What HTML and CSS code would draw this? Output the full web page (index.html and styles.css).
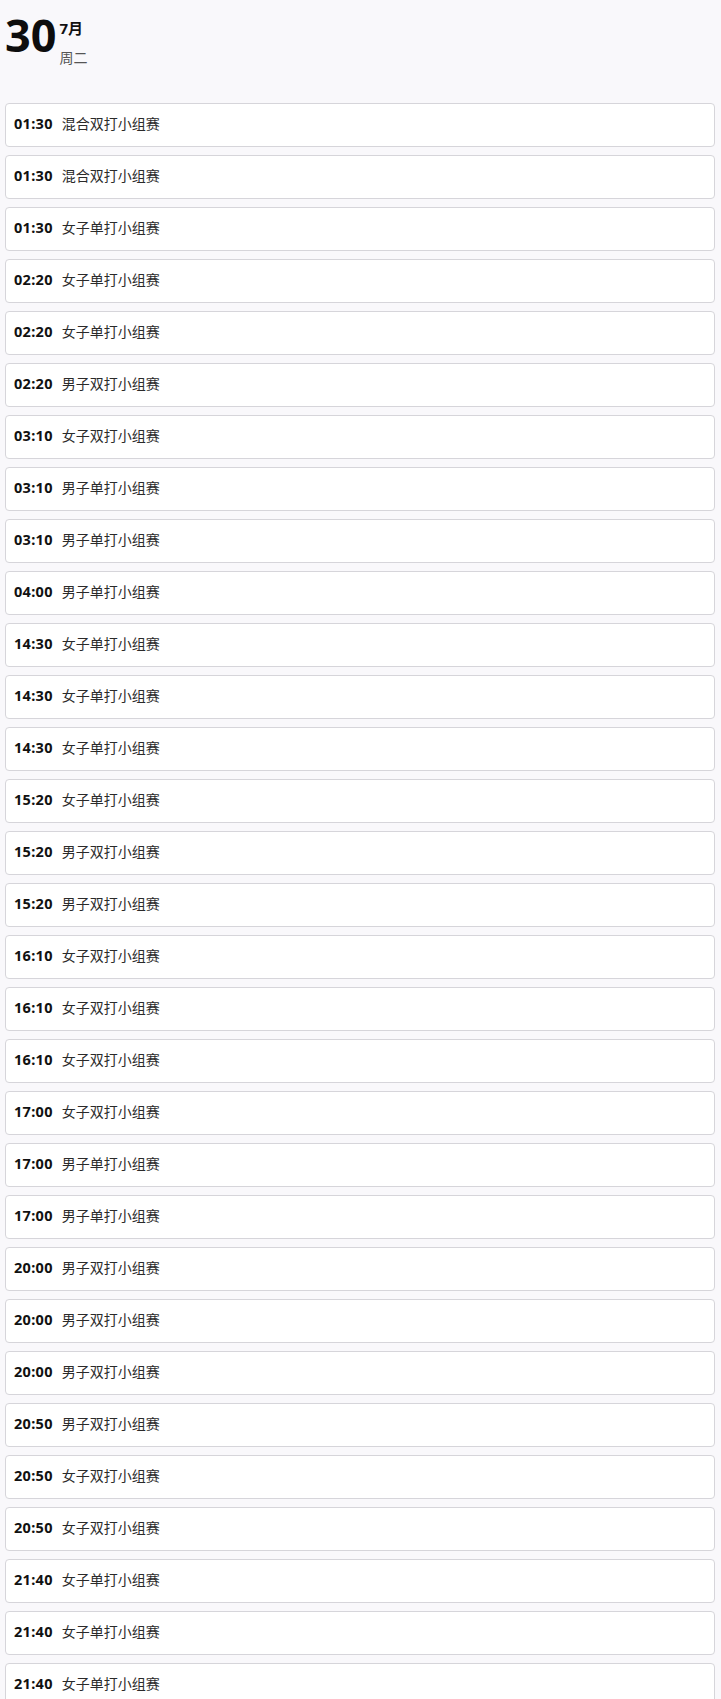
FILE: index.html
```html
<!DOCTYPE html>
<html lang="zh">
<head>
<meta charset="utf-8">
<link rel="stylesheet" href="styles.css">
</head>
<body>
<header class="date">
  <div class="day">30</div>
  <div class="meta">
    <div class="month">7月</div>
    <div class="weekday">周二</div>
  </div>
</header>
<ul class="list">
  <li class="item"><span class="time">01:30</span><span class="name">混合双打小组赛</span></li>
  <li class="item"><span class="time">01:30</span><span class="name">混合双打小组赛</span></li>
  <li class="item"><span class="time">01:30</span><span class="name">女子单打小组赛</span></li>
  <li class="item"><span class="time">02:20</span><span class="name">女子单打小组赛</span></li>
  <li class="item"><span class="time">02:20</span><span class="name">女子单打小组赛</span></li>
  <li class="item"><span class="time">02:20</span><span class="name">男子双打小组赛</span></li>
  <li class="item"><span class="time">03:10</span><span class="name">女子双打小组赛</span></li>
  <li class="item"><span class="time">03:10</span><span class="name">男子单打小组赛</span></li>
  <li class="item"><span class="time">03:10</span><span class="name">男子单打小组赛</span></li>
  <li class="item"><span class="time">04:00</span><span class="name">男子单打小组赛</span></li>
  <li class="item"><span class="time">14:30</span><span class="name">女子单打小组赛</span></li>
  <li class="item"><span class="time">14:30</span><span class="name">女子单打小组赛</span></li>
  <li class="item"><span class="time">14:30</span><span class="name">女子单打小组赛</span></li>
  <li class="item"><span class="time">15:20</span><span class="name">女子单打小组赛</span></li>
  <li class="item"><span class="time">15:20</span><span class="name">男子双打小组赛</span></li>
  <li class="item"><span class="time">15:20</span><span class="name">男子双打小组赛</span></li>
  <li class="item"><span class="time">16:10</span><span class="name">女子双打小组赛</span></li>
  <li class="item"><span class="time">16:10</span><span class="name">女子双打小组赛</span></li>
  <li class="item"><span class="time">16:10</span><span class="name">女子双打小组赛</span></li>
  <li class="item"><span class="time">17:00</span><span class="name">女子双打小组赛</span></li>
  <li class="item"><span class="time">17:00</span><span class="name">男子单打小组赛</span></li>
  <li class="item"><span class="time">17:00</span><span class="name">男子单打小组赛</span></li>
  <li class="item"><span class="time">20:00</span><span class="name">男子双打小组赛</span></li>
  <li class="item"><span class="time">20:00</span><span class="name">男子双打小组赛</span></li>
  <li class="item"><span class="time">20:00</span><span class="name">男子双打小组赛</span></li>
  <li class="item"><span class="time">20:50</span><span class="name">男子双打小组赛</span></li>
  <li class="item"><span class="time">20:50</span><span class="name">女子双打小组赛</span></li>
  <li class="item"><span class="time">20:50</span><span class="name">女子双打小组赛</span></li>
  <li class="item"><span class="time">21:40</span><span class="name">女子单打小组赛</span></li>
  <li class="item"><span class="time">21:40</span><span class="name">女子单打小组赛</span></li>
  <li class="item"><span class="time">21:40</span><span class="name">女子单打小组赛</span></li>
</ul>
</body>
</html>
```
FILE: styles.css
```css
* { box-sizing: border-box; }
html, body {
  margin: 0;
  padding: 0;
  background: #f9f8fb;
  font-family: "Noto Sans", "Noto Sans CJK SC", sans-serif;
  color: #1a1a1a;
}
.date {
  display: flex;
  align-items: flex-start;
  padding: 11px 0 0 5px;
  height: 103px;
}
.day {
  font-size: 45px;
  font-weight: 700;
  line-height: 48px;
  color: #0d0d0d;
}
.meta {
  display: flex;
  flex-direction: column;
  padding-top: 7px;
  margin-left: 3px;
}
.month {
  font-size: 15px;
  font-weight: 700;
  line-height: 20px;
  color: #111;
}
.weekday {
  font-size: 14px;
  line-height: 18px;
  margin-top: 11px;
  color: #555;
}
.list {
  list-style: none;
  margin: 0;
  padding: 0 6px 0 5px;
  display: flex;
  flex-direction: column;
  gap: 8px;
}
.item {
  height: 44px;
  display: flex;
  align-items: center;
  padding: 0 0 5px 8px;
  background: #fff;
  border: 1px solid #d6d5da;
  border-radius: 4px;
  font-size: 14px;
}
.time {
  font-size: 14.5px;
  font-weight: 700;
  color: #111;
  letter-spacing: 0.3px;
  margin-right: 9px;
}
.name {
  color: #2a2a2a;
}
```
